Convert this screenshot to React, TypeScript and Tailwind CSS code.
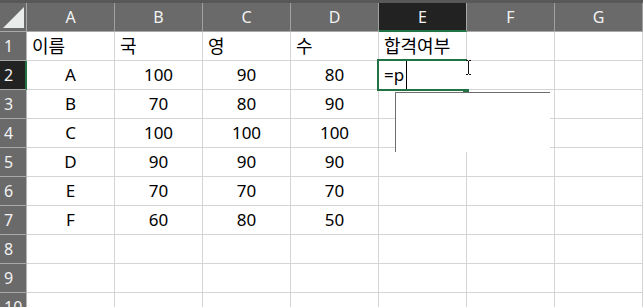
import React from "react";

const cols = ["A", "B", "C", "D", "E", "F", "G"];

type Row = { n: number; cells: string[] };

const rows: Row[] = [
  { n: 1, cells: ["이름", "국", "영", "수", "합격여부", "", ""] },
  { n: 2, cells: ["A", "100", "90", "80", "", "", ""] },
  { n: 3, cells: ["B", "70", "80", "90", "", "", ""] },
  { n: 4, cells: ["C", "100", "100", "100", "", "", ""] },
  { n: 5, cells: ["D", "90", "90", "90", "", "", ""] },
  { n: 6, cells: ["E", "70", "70", "70", "", "", ""] },
  { n: 7, cells: ["F", "60", "80", "50", "", "", ""] },
  { n: 8, cells: ["", "", "", "", "", "", ""] },
  { n: 9, cells: ["", "", "", "", "", "", ""] },
  { n: 10, cells: ["", "", "", "", "", "", ""] },
];

export default function App() {
  return (
    <div className="relative w-[643px] h-[307px] overflow-hidden bg-white font-['Noto_Sans','Noto_Sans_CJK_KR',sans-serif] text-black">
      {/* top strip */}
      <div className="h-[3px] bg-[#585858]" />
      {/* column header */}
      <div className="flex h-[29px] bg-[#6a6a6a] border-b border-[#a9a9a9]">
        <div className="relative w-[27px] border-r border-[#a9a9a9]">
          <svg className="absolute left-[3px] top-[4px]" width="21" height="21" viewBox="0 0 21 21">
            <polygon points="21,0 21,21 0,21" fill="#e9ecea" />
          </svg>
        </div>
        {cols.map((c) =>
          c === "E" ? (
            <div
              key={c}
              className="w-[88px] flex items-center justify-center bg-[#222222] border-b-2 border-[#217346] -mb-px text-[16px] text-[#f2f2f2] border-r border-r-[#a9a9a9]"
            >
              {c}
            </div>
          ) : (
            <div
              key={c}
              className="w-[88px] flex items-center justify-center border-r border-[#a0a0a0] text-[16px] text-[#f2f2f2] pb-px"
            >
              {c}
            </div>
          )
        )}
      </div>
      {/* rows */}
      {rows.map((r) => (
        <div key={r.n} className="flex h-[29px]">
          <div
            className={
              r.n === 2
                ? "w-[27px] flex items-center pl-[4px] bg-[#222222] border-r-2 border-[#217346] border-b border-b-[#a9a9a9] text-[16px] text-[#f2f2f2]"
                : "w-[27px] flex items-center pl-[4px] bg-[#6a6a6a] border-r border-[#b5b5b5] border-b border-b-[#a9a9a9] text-[16px] text-[#f2f2f2]"
            }
          >
            {r.n}
          </div>
          {r.cells.map((v, i) => (
            <div
              key={i}
              className={
                r.n === 1
                  ? "w-[88px] flex items-center pl-[5px] border-r border-b border-[#d4d4d4] text-[18px] whitespace-nowrap"
                  : "w-[88px] flex items-center justify-center border-r border-b border-[#d4d4d4] text-[17px]"
              }
            >
              {v}
            </div>
          ))}
        </div>
      ))}

      {/* selected editing cell E2 */}
      <div className="absolute left-[377px] top-[59px] w-[90px] h-[32px] bg-white border-l-2 border-t-2 border-b-2 border-[#217346] flex items-center pl-[5px] text-[17px]">
        <span>=p</span>
        <span className="ml-[2px] w-px h-[28px] bg-black" />
      </div>
      {/* fill handle */}
      <div className="absolute left-[463px] top-[89px] w-[6px] h-[4px] bg-[#217346]" />

      {/* autocomplete dropdown */}
      <div className="absolute left-[395px] top-[92px] w-[155px] h-[60px] bg-white border-l border-t border-[#6e6e6e]" />

      {/* I-beam mouse cursor */}
      <svg className="absolute left-[465px] top-[59px]" width="7" height="17" viewBox="0 0 7 17">
        <path d="M1 1.5 H3 M4 1.5 H6 M3.5 2 V15 M1 15.5 H3 M4 15.5 H6" stroke="#111" strokeWidth="1" fill="none" />
      </svg>
    </div>
  );
}
